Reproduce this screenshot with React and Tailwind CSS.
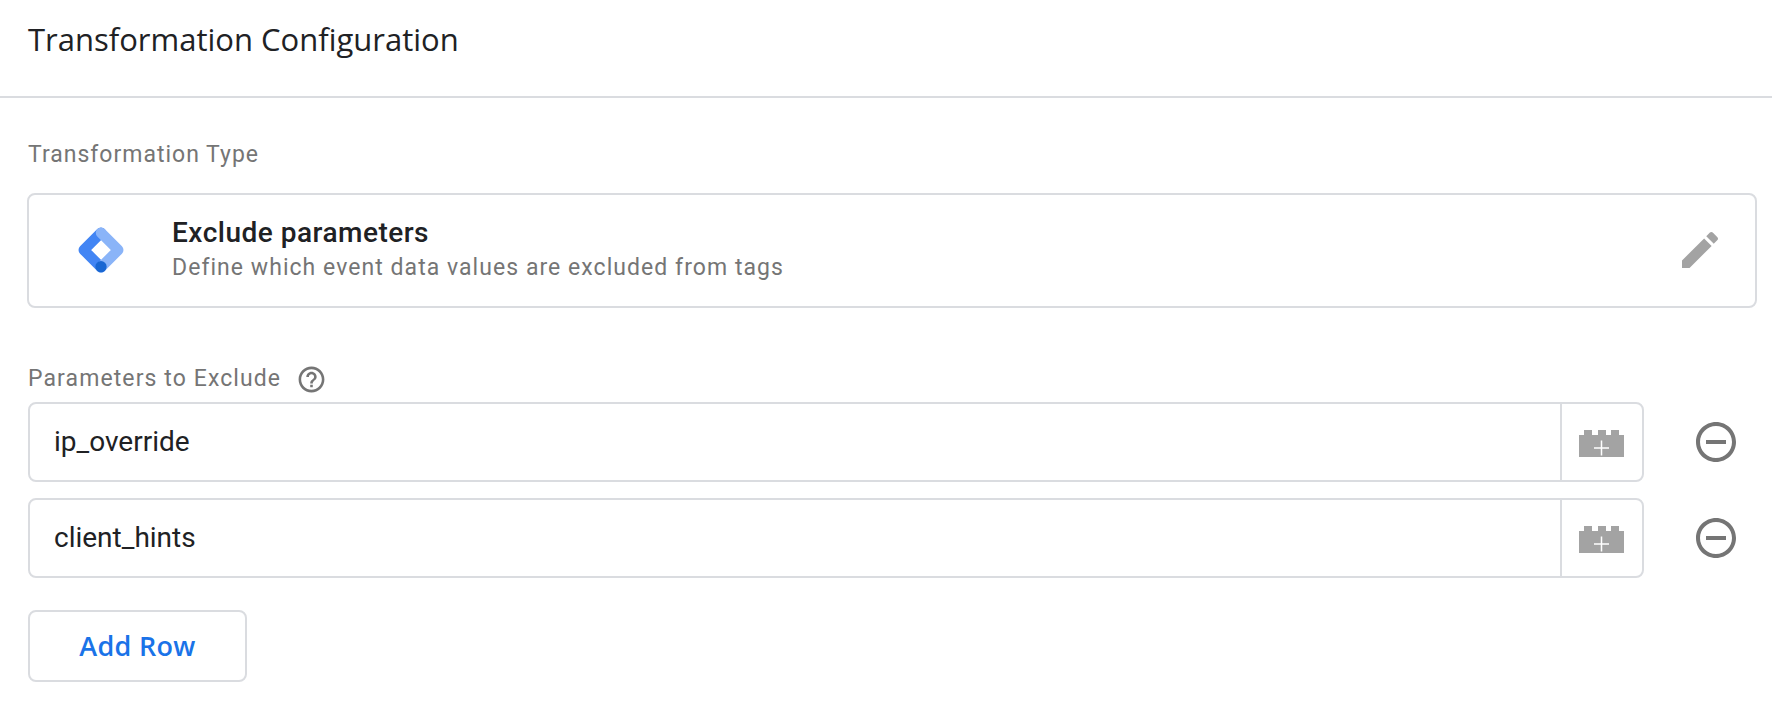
function Edit() {
  return (
    <svg viewBox="0 0 24 24" className="w-12 h-12 shrink-0 fill-[#a3a3a3]">
      <path d="M3 17.25V21h3.75L17.81 9.94l-3.75-3.75L3 17.25zM20.71 7.04c.39-.39.39-1.02 0-1.41l-2.34-2.34c-.39-.39-1.02-.39-1.41 0l-1.83 1.83 3.75 3.75 1.83-1.83z" />
    </svg>
  );
}
function Logo() {
  return (
    <svg viewBox="0 0 44 44" className="w-[46px] h-[46px] shrink-0" fill="none">
      <path d="M22 5.5 L5.5 22 L22 38.5" stroke="#4285f4" strokeWidth="10" strokeLinecap="round" strokeLinejoin="round" />
      <path d="M22 5.5 L38.5 22 L22 38.5" stroke="#8ab4f8" strokeWidth="10" strokeLinecap="round" strokeLinejoin="round" />
      <circle cx="22" cy="38" r="5.4" fill="#1967d2" />
    </svg>
  );
}
function Brick() {
  return (
    <svg viewBox="0 0 45 27" className="mt-[3px] w-[45px] h-[27px]">
      <path fill="#a3a3a3" d="M0 5h5V0h8v5h6V0h8v5h5V0h8v5h5v22H0z" />
      <path stroke="#fff" strokeWidth="1.5" d="M15 18h15M22.5 10.5v15" />
    </svg>
  );
}
function Row({ value }) {
  return (
    <div className="flex items-center">
      <div className="flex h-[80px] w-[1616px] items-stretch rounded-lg border-2 border-[#dadce0]">
        <div className="flex flex-1 items-center pl-[24px] text-[28px] text-[#202124]">{value}</div>
        <div className="flex w-[82px] items-center justify-center border-l-2 border-[#dadce0] pr-[2px]">
          <Brick />
        </div>
      </div>
      <svg viewBox="0 0 24 24" className="ml-[48px] h-12 w-12 fill-[#757575]">
        <path d="M7 11v2h10v-2H7zm5-9C6.48 2 2 6.48 2 12s4.48 10 10 10 10-4.48 10-10S17.52 2 12 2zm0 18c-4.41 0-8-3.59-8-8s3.59-8 8-8 8 3.59 8 8-3.59 8-8 8z" />
      </svg>
    </div>
  );
}
export default function App() {
  return (
    <div className="h-[702px] w-full overflow-hidden bg-white font-['Roboto',sans-serif]">
      <header className="flex h-[98px] items-center border-b-2 border-[#dadce0] pb-[18px] pl-[28px]">
        <h1 className="font-['Open_Sans',sans-serif] text-[31px] font-normal text-[#202124]">Transformation Configuration</h1>
      </header>
      <main className="pl-[28px] pr-[15px]">
        <div className="mt-[43px] text-[23px] leading-[28px] tracking-[1px] text-[#757575]">Transformation Type</div>
        <section className="-ml-[1px] mt-[24px] flex h-[115px] items-center rounded-lg border-2 border-[#dadce0] pb-[1px] pl-[49px] pr-[31px]">
          <Logo />
          <div className="ml-[48px] flex-1">
            <div className="text-[28px] font-medium leading-[34px] tracking-[0.5px] text-[#202124]">Exclude parameters</div>
            <div className="mt-[2px] text-[23px] leading-[32px] tracking-[1.05px] text-[#757575]">Define which event data values are excluded from tags</div>
          </div>
          <Edit />
        </section>
        <div className="mt-[55px] flex h-[32px] items-center">
          <span className="text-[23px] tracking-[1.1px] text-[#757575]">Parameters to Exclude</span>
          <svg viewBox="0 0 24 24" className="ml-[15px] h-[31px] w-[31px] fill-[#757575]">
            <path d="M11 18h2v-2h-2v2zm1-16C6.48 2 2 6.48 2 12s4.48 10 10 10 10-4.48 10-10S17.52 2 12 2zm0 18c-4.41 0-8-3.59-8-8s3.59-8 8-8 8 3.59 8 8-3.59 8-8 8zm0-14c-2.21 0-4 1.79-4 4h2c0-1.1.9-2 2-2s2 .9 2 2c0 2-3 1.75-3 5h2c0-2.25 3-2.5 3-5 0-2.21-1.79-4-4-4z" />
          </svg>
        </div>
        <div className="mt-[7px] flex flex-col gap-[16px]">
          <Row value="ip_override" />
          <Row value="client_hints" />
        </div>
        <button className="mt-[32px] flex h-[72px] w-[219px] items-center justify-center rounded-lg border-2 border-[#dadce0] font-['Open_Sans',sans-serif] text-[27px] font-semibold tracking-[0.3px] text-[#1a73e8]">Add Row</button>
      </main>
    </div>
  );
}
